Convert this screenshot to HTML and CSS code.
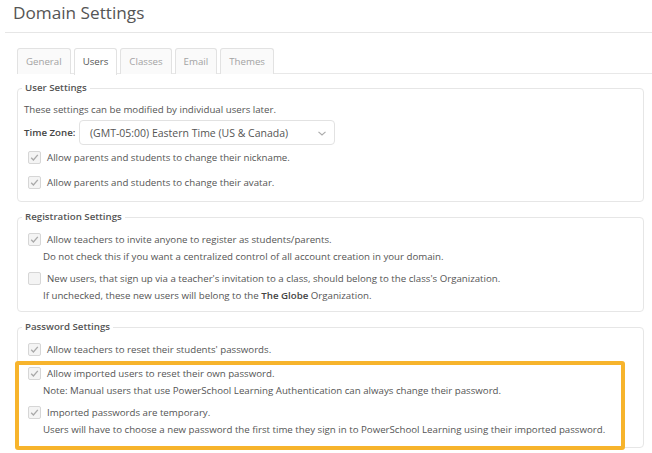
FILE: index.html
```html
<!DOCTYPE html>
<html>
<head>
<meta charset="utf-8">
<link rel="stylesheet" href="styles.css">
</head>
<body>
<div class="page">
  <div class="header"><h1 class="title">Domain Settings</h1></div>
  <div class="tabs">
    <div class="tab">General</div>
    <div class="tab active">Users</div>
    <div class="tab">Classes</div>
    <div class="tab">Email</div>
    <div class="tab">Themes</div>
  </div>

  <fieldset class="group g1">
    <legend class="legend">User Settings</legend>
    <div class="desc">These settings can be modified by individual users later.</div>
    <div class="tz">
      <span class="tz-label">Time Zone:</span>
      <div class="select">
        <span>(GMT-05:00) Eastern Time (US &amp; Canada)</span>
        <svg class="chev" width="8" height="5" viewBox="0 0 8 5"><path d="M0.5 0.8 L4 4 L7.5 0.8" fill="none" stroke="#aaa" stroke-width="1.1"/></svg>
      </div>
    </div>
    <div class="row r1"><span class="cb on"><svg width="11" height="11" viewBox="0 0 11 11"><path d="M2.2 5.8 L4.4 8 L8.8 2.8" fill="none" stroke="#a9a9a9" stroke-width="1.3"/></svg></span>Allow parents and students to change their nickname.</div>
    <div class="row r2"><span class="cb on"><svg width="11" height="11" viewBox="0 0 11 11"><path d="M2.2 5.8 L4.4 8 L8.8 2.8" fill="none" stroke="#a9a9a9" stroke-width="1.3"/></svg></span>Allow parents and students to change their avatar.</div>
  </fieldset>

  <fieldset class="group g2">
    <legend class="legend">Registration Settings</legend>
    <div class="opt">
      <div class="row"><span class="cb on"><svg width="11" height="11" viewBox="0 0 11 11"><path d="M2.2 5.8 L4.4 8 L8.8 2.8" fill="none" stroke="#a9a9a9" stroke-width="1.3"/></svg></span>Allow teachers to invite anyone to register as students/parents.</div>
      <div class="sub">Do not check this if you want a centralized control of all account creation in your domain.</div>
    </div>
    <div class="opt next">
      <div class="row"><span class="cb"></span>New users, that sign up via a teacher's invitation to a class, should belong to the class's Organization.</div>
      <div class="sub">If unchecked, these new users will belong to the <b>The Globe</b> Organization.</div>
    </div>
  </fieldset>

  <fieldset class="group g3">
    <legend class="legend">Password Settings</legend>
    <div class="row"><span class="cb on"><svg width="11" height="11" viewBox="0 0 11 11"><path d="M2.2 5.8 L4.4 8 L8.8 2.8" fill="none" stroke="#a9a9a9" stroke-width="1.3"/></svg></span>Allow teachers to reset their students' passwords.</div>
    <div class="highlight">
      <div class="opt">
        <div class="row"><span class="cb on"><svg width="11" height="11" viewBox="0 0 11 11"><path d="M2.2 5.8 L4.4 8 L8.8 2.8" fill="none" stroke="#a9a9a9" stroke-width="1.3"/></svg></span>Allow imported users to reset their own password.</div>
        <div class="sub">Note: Manual users that use PowerSchool Learning Authentication can always change their password.</div>
      </div>
      <div class="opt next2">
        <div class="row"><span class="cb on"><svg width="11" height="11" viewBox="0 0 11 11"><path d="M2.2 5.8 L4.4 8 L8.8 2.8" fill="none" stroke="#a9a9a9" stroke-width="1.3"/></svg></span>Imported passwords are temporary.</div>
        <div class="sub">Users will have to choose a new password the first time they sign in to PowerSchool Learning using their imported password.</div>
      </div>
    </div>
  </fieldset>
</div>
</body>
</html>
```

FILE: styles.css
```css
* { box-sizing: border-box; }
html, body { margin: 0; padding: 0; background: #fff; }
body {
  font-family: "Open Sans", "DejaVu Sans", sans-serif;
  font-size: 9.7px;
  color: #555;
  width: 652px;
  height: 453px;
  overflow: hidden;
}
.header {
  margin-left: 5px;
  border-bottom: 1px solid #e6e6e6;
  height: 33px;
  padding: 0 0 0 8px;
}
.title {
  margin: 0;
  font-size: 17.2px;
  font-weight: 400;
  line-height: 25px;
  color: #555;
}
.tabs {
  display: flex;
  gap: 3px;
  margin: 15px 0 0 17px;
  border-bottom: 1px solid #e8e8e8;
  height: 26px;
}
.tab {
  height: 26px;
  padding: 0 8px;
  line-height: 25px;
  border: 1px solid #e2e2e2;
  border-bottom: none;
  border-radius: 3px 3px 0 0;
  background: #fafafa;
  color: #a3a3a3;
}
.tab.active {
  background: #fff;
  color: #555;
  margin-bottom: -1px;
  height: 27px;
}
.group {
  margin: 8px 8px 0 17px;
  border: 1px solid #e6e6e6;
  border-radius: 4px;
  padding: 6px 6px 10px 6px;
  min-width: 0;
}
.legend {
  padding: 0 3px;
  margin-left: -2px;
  font-weight: 600;
  color: #555;
  line-height: 14px;
}
.desc { line-height: 17px; }
.tz {
  display: flex;
  align-items: center;
  margin-top: 2px;
}
.tz-label {
  font-weight: 600;
  color: #444;
  width: 55px;
}
.select {
  width: 256px;
  height: 25px;
  border: 1px solid #e2e2e2;
  border-radius: 4px;
  display: flex;
  align-items: center;
  justify-content: space-between;
  padding: 0 8px 0 10px;
  color: #555;
  font-size: 10.5px;
}
.chev { margin-top: 1px; }
.row {
  display: flex;
  align-items: center;
  line-height: 17px;
  padding-left: 4px;
}
.r1 { margin-top: 4px; }
.r2 { margin-top: 8px; }
.cb {
  width: 13px;
  height: 13px;
  border: 1px solid #d6d6d6;
  border-radius: 2px;
  background: #f4f4f4;
  margin-right: 6px;
  flex: none;
  display: flex;
  align-items: center;
  justify-content: center;
}
.cb.on svg { display: block; }
.sub {
  line-height: 17px;
  padding-left: 19px;
}
.sub b { font-weight: 600; color: #444; }
.g1 { margin-top: 7px; padding-bottom: 10px; }
.g2 { padding-top: 7px; padding-bottom: 7px; }
.g3 { padding-top: 7px; padding-bottom: 0; }
.opt.next { margin-top: 5px; }
.opt.next2 { margin-top: 5px; }
.highlight {
  margin: 3px 12px -3px -9px;
  border: 4px solid #f7b42c;
  border-radius: 3px;
  padding: 0 5px 8px 5px;
  background: #fff;
}
```
